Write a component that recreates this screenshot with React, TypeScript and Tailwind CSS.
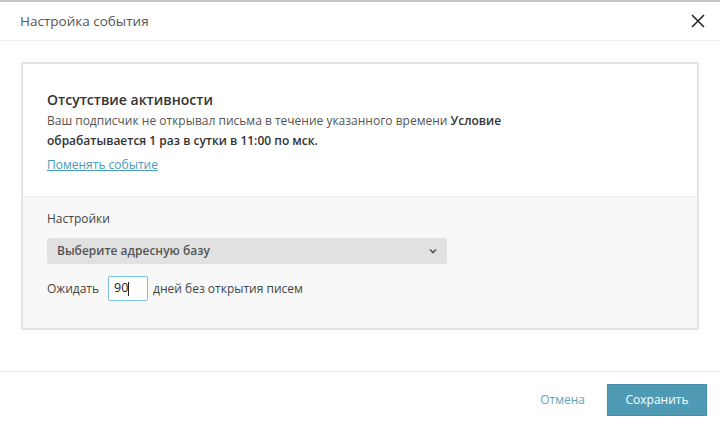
import React from "react";

export default function App() {
    return (
        <div className="w-[720px] h-[428px] bg-white border-t-2 border-[#c4c4c4] flex flex-col font-['Open_Sans',sans-serif]">
            {/* Шапка */}
            <div className="h-[39px] flex items-center justify-between pl-5 pr-[10px] border-b border-[#ececec]">
                <span className="text-[13.5px] text-[#555]">Настройка события</span>
                <button className="w-6 h-6 flex items-center justify-center">
                    <svg width="14" height="14" viewBox="0 0 14 14" stroke="#222" strokeWidth="1.5">
                        <path d="M1 1L13 13M13 1L1 13"/>
                    </svg>
                </button>
            </div>

            {/* Тело */}
            <div className="flex-1 pt-[21px] px-[21px]">
                <div className="border-2 border-[#e4e4e4] w-[678px]">
                    <div className="bg-white px-6 pt-[26px] pb-[21px]">
                        <h2 className="text-[14px] font-semibold text-[#333] leading-5">Отсутствие активности</h2>
                        <p className="text-[12px] text-[#555] leading-5 mt-[1px] pr-[170px]">
                            Ваш подписчик не открывал письма в течение указанного времени{" "}
                            <b className="font-semibold text-[#333]">Условие обрабатывается 1 раз в сутки в 11:00 по мск.</b>
                        </p>
                        <a href="#" className="inline-block mt-[3px] text-[12px] leading-5 text-[#4a9bb8] underline">
                            Поменять событие
                        </a>
                    </div>
                    <div className="bg-[#f8f8f8] border-t border-[#eeeeee] px-6 pt-[12px] pb-[27px]">
                        <div className="text-[12px] text-[#444] leading-5">Настройки</div>
                        <div className="mt-[9px] w-[400px] h-[26px] bg-[#e1e1e1] rounded-[3px] flex items-center justify-between px-[10px]">
                            <span className="text-[12px] font-semibold text-[#555]">Выберите адресную базу</span>
                            <svg width="8" height="6" viewBox="0 0 8 6" fill="none" stroke="#555" strokeWidth="1.6">
                                <path d="M1 1.5L4 4.5L7 1.5"/>
                            </svg>
                        </div>
                        <div className="mt-[12px] flex items-center text-[12px] text-[#444]">
                            <span>Ожидать</span>
                            <div className="ml-[9px] mr-[5px] w-[40px] h-[25px] border border-[#7cc3dc] bg-white rounded-[2px] flex items-center px-[5px] text-[12.5px] text-[#222]">
                                90<span className="w-px h-[14px] bg-[#222]"></span>
                            </div>
                            <span>дней без открытия писем</span>
                        </div>
                    </div>
                </div>
            </div>

            {/* Подвал */}
            <div className="h-[57px] border-t border-[#ececec] flex items-center justify-end pr-[13px] gap-[22px]">
                <button className="text-[12px] text-[#5fa3bd]">Отмена</button>
                <button className="w-[100px] h-[32px] bg-[#4f9bb5] text-white text-[12px] border border-[#468ea6]">
                    Сохранить
                </button>
            </div>
        </div>
    );
}
